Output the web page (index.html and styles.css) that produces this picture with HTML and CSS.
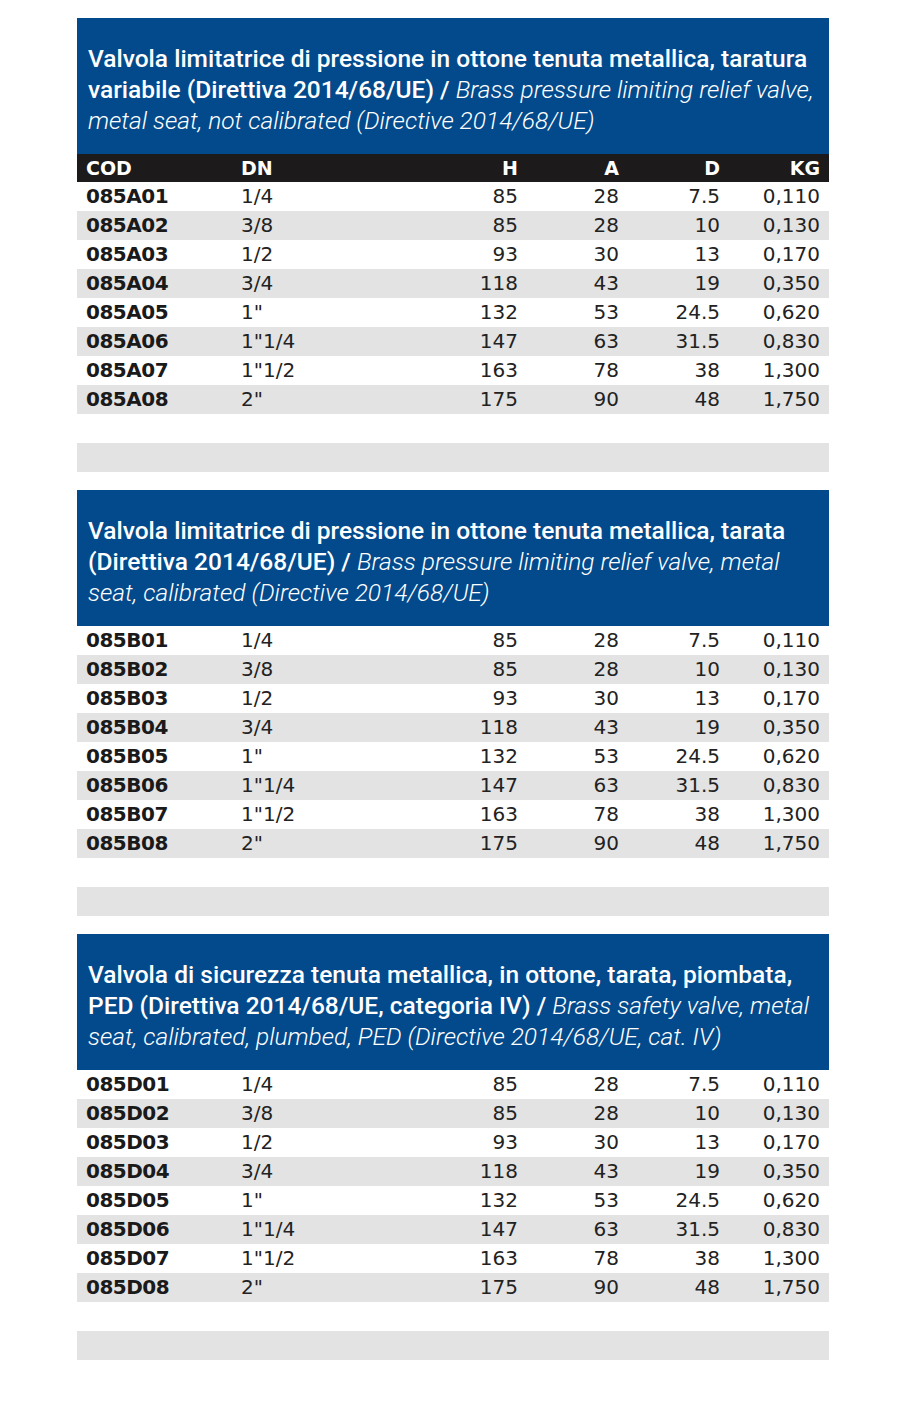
FILE: index.html
```html
<!DOCTYPE html>
<html lang="it">
<head>
<meta charset="utf-8">
<title>Valvole limitatrici</title>
<link rel="stylesheet" href="styles.css">
</head>
<body>
<main class="page">

<section class="block">
  <h2 class="title"><span class="it">Valvola limitatrice di pressione in ottone tenuta metallica, taratura variabile (Direttiva 2014/68/UE) / </span><span class="en">Brass pressure limiting relief valve, metal seat, not calibrated (Directive 2014/68/UE)</span></h2>
  <table class="data">
    <colgroup><col class="c-cod"><col class="c-dn"><col class="c-h"><col class="c-a"><col class="c-d"><col class="c-kg"></colgroup>
    <thead>
      <tr><th class="l">COD</th><th class="l">DN</th><th>H</th><th>A</th><th>D</th><th>KG</th></tr>
    </thead>
    <tbody>
      <tr><td class="cod">085A01</td><td class="l">1/4</td><td>85</td><td>28</td><td>7.5</td><td>0,110</td></tr>
      <tr><td class="cod">085A02</td><td class="l">3/8</td><td>85</td><td>28</td><td>10</td><td>0,130</td></tr>
      <tr><td class="cod">085A03</td><td class="l">1/2</td><td>93</td><td>30</td><td>13</td><td>0,170</td></tr>
      <tr><td class="cod">085A04</td><td class="l">3/4</td><td>118</td><td>43</td><td>19</td><td>0,350</td></tr>
      <tr><td class="cod">085A05</td><td class="l">1"</td><td>132</td><td>53</td><td>24.5</td><td>0,620</td></tr>
      <tr><td class="cod">085A06</td><td class="l">1"1/4</td><td>147</td><td>63</td><td>31.5</td><td>0,830</td></tr>
      <tr><td class="cod">085A07</td><td class="l">1"1/2</td><td>163</td><td>78</td><td>38</td><td>1,300</td></tr>
      <tr><td class="cod">085A08</td><td class="l">2"</td><td>175</td><td>90</td><td>48</td><td>1,750</td></tr>
    </tbody>
  </table>
  <div class="bar"></div>
</section>

<section class="block">
  <h2 class="title"><span class="it">Valvola limitatrice di pressione in ottone tenuta metallica, tarata (Direttiva 2014/68/UE) / </span><span class="en">Brass pressure limiting relief valve, metal seat, calibrated (Directive 2014/68/UE)</span></h2>
  <table class="data">
    <colgroup><col class="c-cod"><col class="c-dn"><col class="c-h"><col class="c-a"><col class="c-d"><col class="c-kg"></colgroup>
    <tbody>
      <tr><td class="cod">085B01</td><td class="l">1/4</td><td>85</td><td>28</td><td>7.5</td><td>0,110</td></tr>
      <tr><td class="cod">085B02</td><td class="l">3/8</td><td>85</td><td>28</td><td>10</td><td>0,130</td></tr>
      <tr><td class="cod">085B03</td><td class="l">1/2</td><td>93</td><td>30</td><td>13</td><td>0,170</td></tr>
      <tr><td class="cod">085B04</td><td class="l">3/4</td><td>118</td><td>43</td><td>19</td><td>0,350</td></tr>
      <tr><td class="cod">085B05</td><td class="l">1"</td><td>132</td><td>53</td><td>24.5</td><td>0,620</td></tr>
      <tr><td class="cod">085B06</td><td class="l">1"1/4</td><td>147</td><td>63</td><td>31.5</td><td>0,830</td></tr>
      <tr><td class="cod">085B07</td><td class="l">1"1/2</td><td>163</td><td>78</td><td>38</td><td>1,300</td></tr>
      <tr><td class="cod">085B08</td><td class="l">2"</td><td>175</td><td>90</td><td>48</td><td>1,750</td></tr>
    </tbody>
  </table>
  <div class="bar"></div>
</section>

<section class="block">
  <h2 class="title"><span class="it">Valvola di sicurezza tenuta metallica, in ottone, tarata, piombata, PED (Direttiva 2014/68/UE, categoria IV) / </span><span class="en">Brass safety valve, metal seat, calibrated, plumbed, PED (Directive 2014/68/UE, cat. IV)</span></h2>
  <table class="data">
    <colgroup><col class="c-cod"><col class="c-dn"><col class="c-h"><col class="c-a"><col class="c-d"><col class="c-kg"></colgroup>
    <tbody>
      <tr><td class="cod">085D01</td><td class="l">1/4</td><td>85</td><td>28</td><td>7.5</td><td>0,110</td></tr>
      <tr><td class="cod">085D02</td><td class="l">3/8</td><td>85</td><td>28</td><td>10</td><td>0,130</td></tr>
      <tr><td class="cod">085D03</td><td class="l">1/2</td><td>93</td><td>30</td><td>13</td><td>0,170</td></tr>
      <tr><td class="cod">085D04</td><td class="l">3/4</td><td>118</td><td>43</td><td>19</td><td>0,350</td></tr>
      <tr><td class="cod">085D05</td><td class="l">1"</td><td>132</td><td>53</td><td>24.5</td><td>0,620</td></tr>
      <tr><td class="cod">085D06</td><td class="l">1"1/4</td><td>147</td><td>63</td><td>31.5</td><td>0,830</td></tr>
      <tr><td class="cod">085D07</td><td class="l">1"1/2</td><td>163</td><td>78</td><td>38</td><td>1,300</td></tr>
      <tr><td class="cod">085D08</td><td class="l">2"</td><td>175</td><td>90</td><td>48</td><td>1,750</td></tr>
    </tbody>
  </table>
  <div class="bar"></div>
</section>

</main>
</body>
</html>
```

FILE: styles.css
```css
html, body {
  margin: 0;
  padding: 0;
  background: #ffffff;
}

.page {
  width: 752px;
  margin-left: 77px;
  padding-top: 18px;
}

.block {
  margin-bottom: 18px;
}

.title {
  margin: 0;
  background: #034a8c;
  color: #ffffff;
  font-family: "Roboto", "Liberation Sans", sans-serif;
  font-size: 24.5px;
  line-height: 31px;
  font-weight: 400;
  padding: 25px 10px 18px 11px;
}

.title .it {
  font-weight: 500;
}

.title .en {
  font-style: italic;
  font-weight: 300;
}

.data {
  width: 752px;
  border-collapse: collapse;
  table-layout: fixed;
  font-family: "DejaVu Sans", Verdana, sans-serif;
  font-size: 20px;
  color: #222222;
}

.c-cod { width: 155px; }
.c-dn { width: 195px; }
.c-h { width: 100px; }
.c-a { width: 101px; }
.c-d { width: 101px; }
.c-kg { width: 100px; }

.data th,
.data td {
  padding: 0 9px;
  text-align: right;
  white-space: nowrap;
}

.data th {
  height: 28px;
  background: #1c1a1a;
  color: #ffffff;
  font-size: 19px;
  font-weight: bold;
  line-height: 28px;
}

.data td {
  height: 29px;
  line-height: 29px;
}

.data .l {
  text-align: left;
}

.data .cod {
  text-align: left;
  font-weight: bold;
  color: #1a1a1a;
  letter-spacing: -0.5px;
}

.data tbody tr:nth-child(even) td {
  background: #e3e3e3;
}

.bar {
  margin-top: 29px;
  height: 29px;
  background: #e3e3e3;
}
```
